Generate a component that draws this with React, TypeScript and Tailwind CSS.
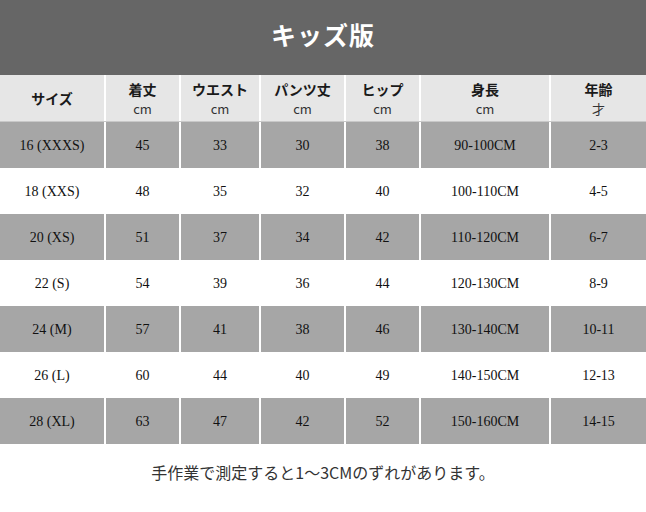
const headers: { label: string; unit?: string }[] = [
  { label: 'サイズ' },
  { label: '着丈', unit: 'cm' },
  { label: 'ウエスト', unit: 'cm' },
  { label: 'パンツ丈', unit: 'cm' },
  { label: 'ヒップ', unit: 'cm' },
  { label: '身長', unit: 'cm' },
  { label: '年齢', unit: '才' },
]

const rows = [
  ['16 (XXXS)', '45', '33', '30', '38', '90-100CM', '2-3'],
  ['18 (XXS)', '48', '35', '32', '40', '100-110CM', '4-5'],
  ['20 (XS)', '51', '37', '34', '42', '110-120CM', '6-7'],
  ['22 (S)', '54', '39', '36', '44', '120-130CM', '8-9'],
  ['24 (M)', '57', '41', '38', '46', '130-140CM', '10-11'],
  ['26 (L)', '60', '44', '40', '49', '140-150CM', '12-13'],
  ['28 (XL)', '63', '47', '42', '52', '150-160CM', '14-15'],
]

const cols = 'grid grid-cols-[104px_73px_78px_83px_73px_128px_1fr] gap-x-[2px]'

export default function App() {
  return (
    <div className="w-[646px] h-[512px] bg-white overflow-hidden" style={{ fontFamily: '"Noto Sans CJK JP", sans-serif' }}>
      <header className="h-[75px] bg-[#666666] flex items-center justify-center pb-[5px]">
        <h1 className="text-[25px] font-bold text-white tracking-[1px]">キッズ版</h1>
      </header>

      <div className={`${cols} h-[47px] border-b border-[#c8c8c8]`}>
        {headers.map((h) => (
          <div key={h.label} className="bg-[#e6e6e6] flex flex-col items-center justify-center">
            <span className="text-[14px] font-bold text-[#1a1a1a] leading-[20px]">{h.label}</span>
            {h.unit && <span className="text-[13px] text-[#333] leading-[19px]">{h.unit}</span>}
          </div>
        ))}
      </div>

      {rows.map((r, i) => (
        <div key={r[0]} className={`${cols} h-[46px]`}>
          {r.map((c, j) => (
            <div
              key={j}
              className={`flex items-center justify-center text-[14px] text-[#111] ${i % 2 === 0 ? 'bg-[#a6a6a6]' : 'bg-white'}`}
              style={{ fontFamily: '"Liberation Serif", serif' }}
            >
              {c}
            </div>
          ))}
        </div>
      ))}

      <p className="text-center text-[16px] text-[#333] mt-[16px]">手作業で測定すると1〜3CMのずれがあります。</p>
    </div>
  )
}
